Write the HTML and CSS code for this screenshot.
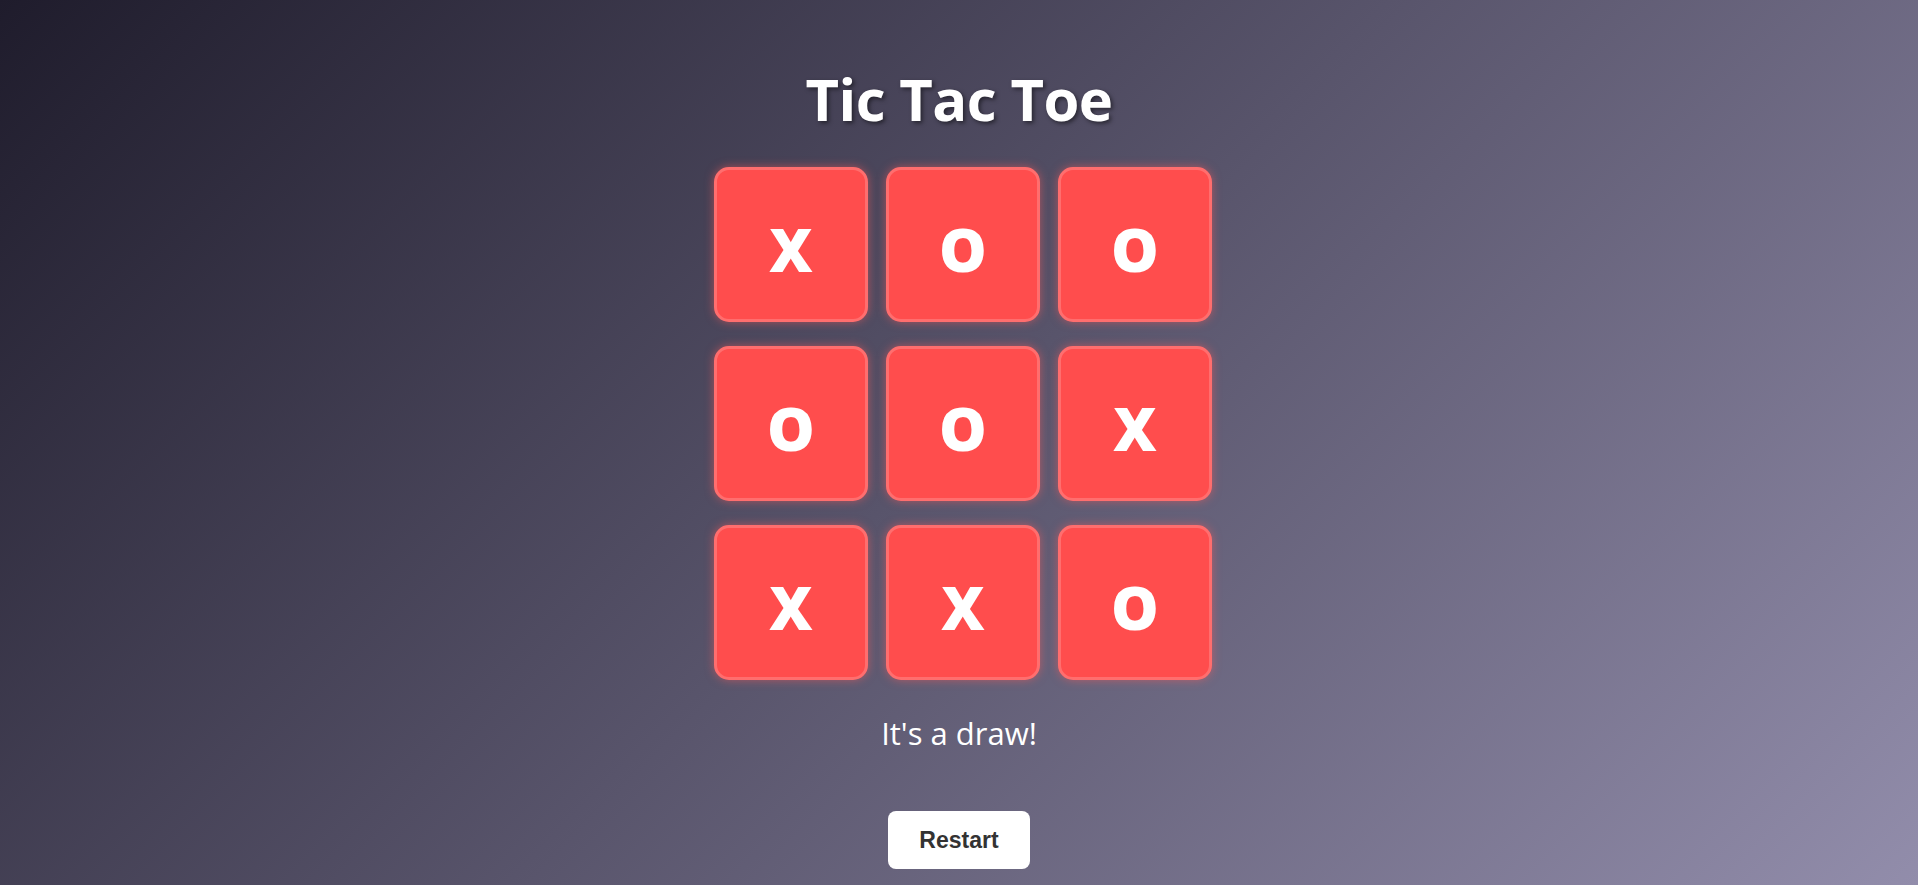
FILE: index.html
```html
<!DOCTYPE html>
<html lang="en">
<head>
<meta charset="utf-8">
<title>Tic Tac Toe</title>
<link rel="stylesheet" href="styles.css">
</head>
<body>
<main class="game">
  <h1 class="title">Tic Tac Toe</h1>
  <div class="board">
    <button class="cell">X</button>
    <button class="cell">O</button>
    <button class="cell">O</button>
    <button class="cell">O</button>
    <button class="cell">O</button>
    <button class="cell">X</button>
    <button class="cell">X</button>
    <button class="cell">X</button>
    <button class="cell">O</button>
  </div>
  <p class="status">It's a draw!</p>
  <button class="restart">Restart</button>
</main>
</body>
</html>
```
FILE: styles.css
```css
html, body {
  margin: 0;
  padding: 0;
}
body {
  min-height: 100vh;
  background: linear-gradient(135deg, #1f1c2c 0%, #928dab 100%);
  font-family: "Open Sans", "Noto Sans", sans-serif;
  color: #fff;
}
.game {
  display: flex;
  flex-direction: column;
  align-items: center;
  padding-top: 59px;
}
.title {
  margin: 0;
  font-size: 58px;
  font-weight: 700;
  line-height: normal;
  letter-spacing: -0.6px;
  text-shadow: 2px 2px 4px rgba(0, 0, 0, 0.5);
}
.board {
  margin-top: 29px;
  margin-left: 8px;
  display: grid;
  grid-template-columns: repeat(3, 154px);
  grid-auto-rows: 155px;
  column-gap: 18px;
  row-gap: 24px;
}
.cell {
  box-sizing: border-box;
  width: 154px;
  height: 155px;
  margin: 0;
  padding: 8px 0 0 0;
  display: flex;
  align-items: center;
  justify-content: center;
  background: #ff4d4d;
  border: 3px solid #ff6e6e;
  border-radius: 15px;
  box-shadow: 0 0 10px rgba(255, 90, 90, 0.55);
  color: #fff;
  font-family: "Open Sans", "Noto Sans", sans-serif;
  font-weight: 800;
  font-size: 60px;
  line-height: normal;
  cursor: pointer;
}
.status {
  margin: 32px 0 0 0;
  font-size: 31px;
  line-height: normal;
  font-weight: 400;
  color: #fff;
}
.restart {
  margin-top: 57px;
  box-sizing: border-box;
  width: 142px;
  height: 58px;
  padding: 0;
  border: none;
  border-radius: 8px;
  background: #fff;
  color: #333;
  font-family: "Liberation Sans", Arial, sans-serif;
  font-weight: 700;
  font-size: 23px;
  cursor: pointer;
}
```
